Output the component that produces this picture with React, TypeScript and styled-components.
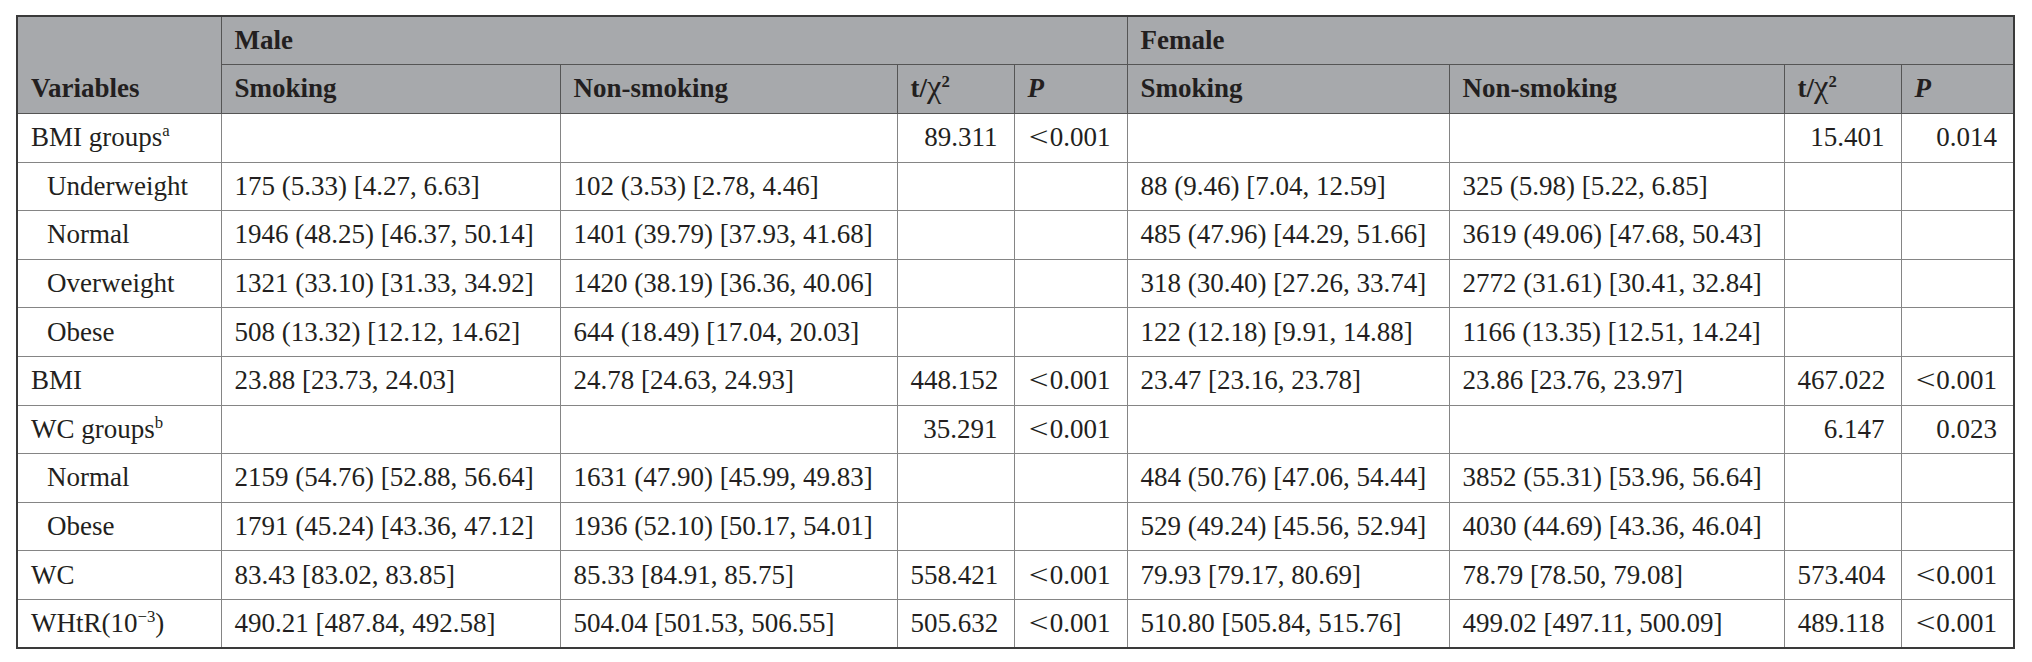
import React from "react";
import styled, { createGlobalStyle } from "styled-components";

const GlobalStyle = createGlobalStyle`
  html, body {
    margin: 0;
    padding: 0;
    background: #ffffff;
  }
  body {
    font-family: "Liberation Serif", "Times New Roman", serif;
  }
`;

const Page = styled.div`
  padding: 15px 0 0 16px;
`;

const Table = styled.table`
  border-collapse: collapse;
  table-layout: fixed;
  width: 1997px;
  border: 2px solid #3a3a3a;
  color: #231f20;
  font-size: 27px;
  line-height: 1.15;
`;

const Col = styled.col<{ $w: number }>`
  width: ${(p) => p.$w}px;
`;

const HeadRow = styled.tr<{ $h: number }>`
  height: ${(p) => p.$h}px;
`;

const BodyRow = styled.tr`
  height: 48.6px;
`;

const HeadCell = styled.th<{ $bottom?: boolean }>`
  background: #a7a9ac;
  font-weight: bold;
  text-align: left;
  padding: ${(p) => (p.$bottom ? "0 13px 9px 13px" : "0 13px")};
  vertical-align: ${(p) => (p.$bottom ? "bottom" : "middle")};
  border: 1px solid #555555;
  white-space: nowrap;
`;

const Cell = styled.td<{ $num?: boolean; $indent?: boolean }>`
  text-align: ${(p) => (p.$num ? "right" : "left")};
  padding: ${(p) =>
    p.$num ? "0 16px 0 13px" : p.$indent ? "0 13px 0 29px" : "0 13px"};
  vertical-align: middle;
  border: 1px solid #858585;
  white-space: nowrap;
`;

const Sup = styled.sup`
  font-size: 0.62em;
  line-height: 0;
  vertical-align: 0.6em;
`;

const Chi = styled.span`
  font-weight: normal;
  font-size: 1.2em;
  line-height: 0;
`;

const Less = styled.span`
  display: inline-block;
  transform: scaleX(1.3);
  margin: 0 0.12em 0 0.06em;
`;

const Ital = styled.i`
  font-style: italic;
`;

const widths = [204, 339, 337, 117, 113, 322, 335, 117, 113];

type Row = {
  label: React.ReactNode;
  indent?: boolean;
  cells: string[];
};

const rows: Row[] = [
  {
    label: (
      <>
        BMI groups<Sup>a</Sup>
      </>
    ),
    cells: ["", "", "89.311", "<0.001", "", "", "15.401", "0.014"],
  },
  {
    label: "Underweight",
    indent: true,
    cells: [
      "175 (5.33) [4.27, 6.63]",
      "102 (3.53) [2.78, 4.46]",
      "",
      "",
      "88 (9.46) [7.04, 12.59]",
      "325 (5.98) [5.22, 6.85]",
      "",
      "",
    ],
  },
  {
    label: "Normal",
    indent: true,
    cells: [
      "1946 (48.25) [46.37, 50.14]",
      "1401 (39.79) [37.93, 41.68]",
      "",
      "",
      "485 (47.96) [44.29, 51.66]",
      "3619 (49.06) [47.68, 50.43]",
      "",
      "",
    ],
  },
  {
    label: "Overweight",
    indent: true,
    cells: [
      "1321 (33.10) [31.33, 34.92]",
      "1420 (38.19) [36.36, 40.06]",
      "",
      "",
      "318 (30.40) [27.26, 33.74]",
      "2772 (31.61) [30.41, 32.84]",
      "",
      "",
    ],
  },
  {
    label: "Obese",
    indent: true,
    cells: [
      "508 (13.32) [12.12, 14.62]",
      "644 (18.49) [17.04, 20.03]",
      "",
      "",
      "122 (12.18) [9.91, 14.88]",
      "1166 (13.35) [12.51, 14.24]",
      "",
      "",
    ],
  },
  {
    label: "BMI",
    cells: [
      "23.88 [23.73, 24.03]",
      "24.78 [24.63, 24.93]",
      "448.152",
      "<0.001",
      "23.47 [23.16, 23.78]",
      "23.86 [23.76, 23.97]",
      "467.022",
      "<0.001",
    ],
  },
  {
    label: (
      <>
        WC groups<Sup>b</Sup>
      </>
    ),
    cells: ["", "", "35.291", "<0.001", "", "", "6.147", "0.023"],
  },
  {
    label: "Normal",
    indent: true,
    cells: [
      "2159 (54.76) [52.88, 56.64]",
      "1631 (47.90) [45.99, 49.83]",
      "",
      "",
      "484 (50.76) [47.06, 54.44]",
      "3852 (55.31) [53.96, 56.64]",
      "",
      "",
    ],
  },
  {
    label: "Obese",
    indent: true,
    cells: [
      "1791 (45.24) [43.36, 47.12]",
      "1936 (52.10) [50.17, 54.01]",
      "",
      "",
      "529 (49.24) [45.56, 52.94]",
      "4030 (44.69) [43.36, 46.04]",
      "",
      "",
    ],
  },
  {
    label: "WC",
    cells: [
      "83.43 [83.02, 83.85]",
      "85.33 [84.91, 85.75]",
      "558.421",
      "<0.001",
      "79.93 [79.17, 80.69]",
      "78.79 [78.50, 79.08]",
      "573.404",
      "<0.001",
    ],
  },
  {
    label: (
      <>
        WHtR(10<Sup>−3</Sup>)
      </>
    ),
    cells: [
      "490.21 [487.84, 492.58]",
      "504.04 [501.53, 506.55]",
      "505.632",
      "<0.001",
      "510.80 [505.84, 515.76]",
      "499.02 [497.11, 500.09]",
      "489.118",
      "<0.001",
    ],
  },
];

const numericCols = new Set([2, 3, 6, 7]);

const renderValue = (v: string) =>
  v.startsWith("<") ? (
    <>
      <Less>&lt;</Less>
      {v.slice(1)}
    </>
  ) : (
    v
  );

const GroupHeaders = () => (
  <>
    <HeadCell>Smoking</HeadCell>
    <HeadCell>Non-smoking</HeadCell>
    <HeadCell>
      t/<Chi>χ</Chi>
      <Sup>2</Sup>
    </HeadCell>
    <HeadCell>
      <Ital>P</Ital>
    </HeadCell>
  </>
);

export default function App() {
  return (
    <>
      <GlobalStyle />
      <Page>
        <Table>
          <colgroup>
            {widths.map((w, i) => (
              <Col key={i} $w={w} />
            ))}
          </colgroup>
          <thead>
            <HeadRow $h={48}>
              <HeadCell rowSpan={2} $bottom>
                Variables
              </HeadCell>
              <HeadCell colSpan={4}>Male</HeadCell>
              <HeadCell colSpan={4}>Female</HeadCell>
            </HeadRow>
            <HeadRow $h={49.5}>
              <GroupHeaders />
              <GroupHeaders />
            </HeadRow>
          </thead>
          <tbody>
            {rows.map((r, i) => (
              <BodyRow key={i}>
                <Cell $indent={r.indent}>{r.label}</Cell>
                {r.cells.map((c, j) => (
                  <Cell key={j} $num={numericCols.has(j)}>
                    {renderValue(c)}
                  </Cell>
                ))}
              </BodyRow>
            ))}
          </tbody>
        </Table>
      </Page>
    </>
  );
}
